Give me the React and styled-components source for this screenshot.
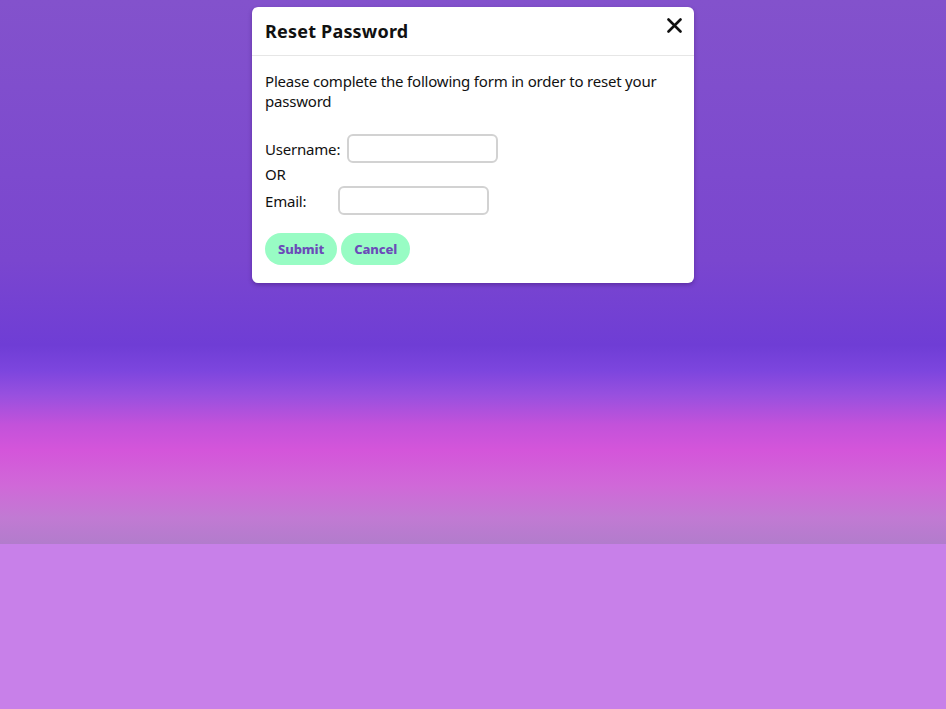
import React from 'react';
import styled, { createGlobalStyle } from 'styled-components';

const GlobalStyle = createGlobalStyle`
  html, body {
    margin: 0;
    padding: 0;
    background: #c880e9;
    font-family: "Noto Sans", "Liberation Sans", sans-serif;
  }
`;

const Backdrop = styled.div`
  height: 544px;
  display: flex;
  flex-direction: column;
  align-items: center;
  padding-top: 7px;
  box-sizing: border-box;
  background: linear-gradient(
    180deg,
    #8352cc 0px,
    #7a46cf 260px,
    #6f3dd5 345px,
    #7c45de 370px,
    #9850df 395px,
    #c352da 425px,
    #d455da 450px,
    #d068d8 485px,
    #c17ad3 518px,
    #b27ccc 544px
  );
`;

const Modal = styled.div`
  width: 442px;
  background: #fff;
  border-radius: 6px;
  box-shadow: 0 2px 4px rgba(60, 20, 110, 0.45);
  color: #111;
`;

const Header = styled.div`
  display: flex;
  align-items: center;
  justify-content: space-between;
  height: 48px;
  padding: 0 10px 0 13px;
  border-bottom: 1px solid #e6e6e6;
`;

const Title = styled.h2`
  margin: 0;
  font-size: 18px;
  font-weight: 700;
  letter-spacing: 0.2px;
`;

const CloseButton = styled.button`
  border: 0;
  background: none;
  padding: 0;
  margin-top: -12px;
  width: 20px;
  height: 20px;
  display: flex;
  align-items: center;
  justify-content: center;
  cursor: pointer;
`;

const Body = styled.div`
  padding: 15px 13px 18px;
  font-size: 15px;
  letter-spacing: -0.2px;
`;

const Intro = styled.p`
  margin: 0 0 23px;
  line-height: 20px;
`;

const Row = styled.div`
  display: flex;
  align-items: center;
`;

const Label = styled.label`
  width: ${(p) => p.$width}px;
`;

const Or = styled.div`
  line-height: 23px;
`;

const Field = styled.input`
  width: 151px;
  height: 29px;
  box-sizing: border-box;
  border: 2px solid #d2d2d2;
  border-radius: 6px;
  padding: 0 8px;
  outline: none;
`;

const Actions = styled.div`
  display: flex;
  gap: 4px;
  margin-top: 18px;
`;

const PillButton = styled.button`
  height: 32px;
  padding: 0 13px;
  border: 0;
  border-radius: 16px;
  background: #98fcc4;
  color: #6b4bb9;
  font-family: inherit;
  font-size: 13px;
  font-weight: 800;
  letter-spacing: -0.1px;
  cursor: pointer;
`;

export default function App() {
  return (
    <>
      <GlobalStyle />
      <Backdrop>
        <Modal>
          <Header>
            <Title>Reset Password</Title>
            <CloseButton aria-label="Close">
              <svg width="15" height="15" viewBox="0 0 15 15">
                <path d="M1.5 1.5 L13.5 13.5 M13.5 1.5 L1.5 13.5" stroke="#111" strokeWidth="2.6" strokeLinecap="round" />
              </svg>
            </CloseButton>
          </Header>
          <Body>
            <Intro>Please complete the following form in order to reset your password</Intro>
            <Row>
              <Label $width={82} htmlFor="username">Username:</Label>
              <Field id="username" type="text" />
            </Row>
            <Or>OR</Or>
            <Row>
              <Label $width={73} htmlFor="email">Email:</Label>
              <Field id="email" type="email" />
            </Row>
            <Actions>
              <PillButton>Submit</PillButton>
              <PillButton>Cancel</PillButton>
            </Actions>
          </Body>
        </Modal>
      </Backdrop>
    </>
  );
}
